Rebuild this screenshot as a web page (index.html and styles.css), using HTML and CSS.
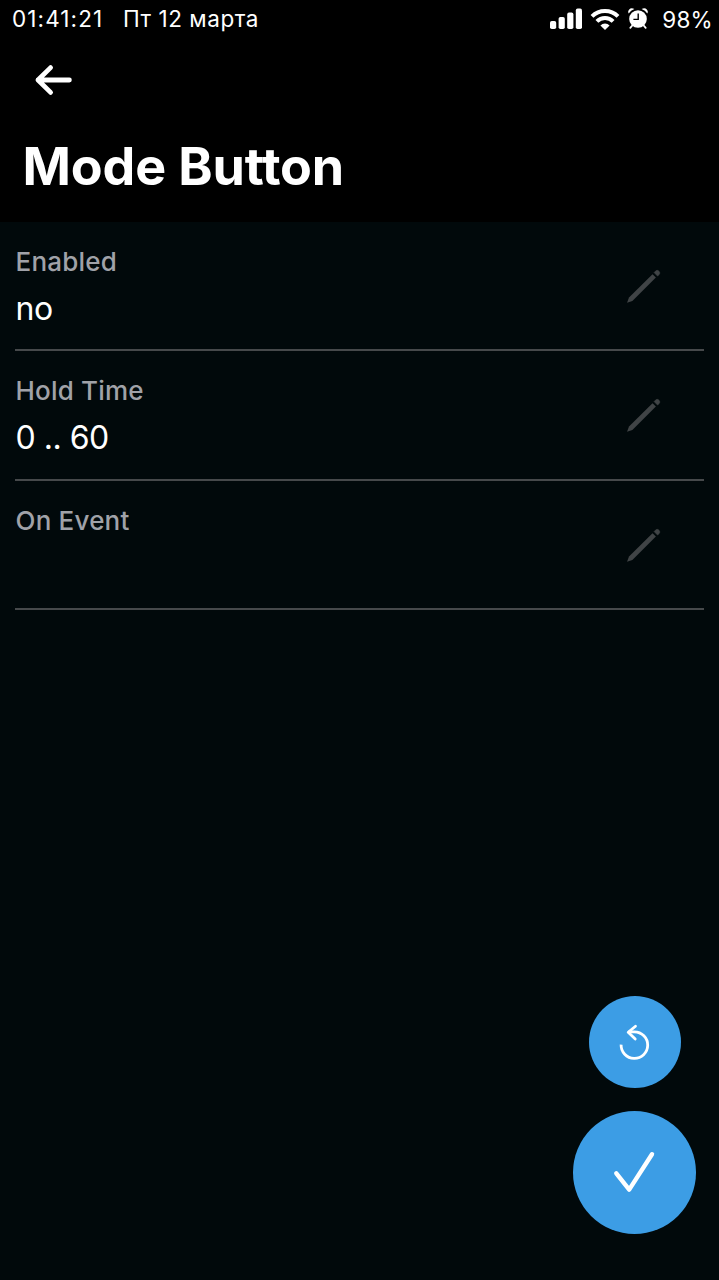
FILE: index.html
```
<!DOCTYPE html>
<html lang="en">
<head>
  <meta charset="utf-8">
  <title>Mode Button</title>
  <link rel="stylesheet" href="styles.css">
</head>
<body>
  <div class="status-bar">
    <span class="time">01:41:21</span>
    <span class="date">Пт 12 марта</span>
    <div class="status-icons">
      <svg class="signal" width="32" height="22" viewBox="0 0 32 22" fill="#fff">
        <rect x="0" y="13" width="6.2" height="8" rx="1.8"/>
        <rect x="8.6" y="9" width="6.2" height="12" rx="1.8"/>
        <rect x="17.2" y="4.6" width="6.2" height="16.4" rx="1.8"/>
        <rect x="25.8" y="0.6" width="6.2" height="20.4" rx="1.8"/>
      </svg>
      <svg class="wifi" width="30" height="22" viewBox="0 0 30 22" fill="none" stroke="#fff" stroke-width="4">
        <path d="M2 8.4a18.4 18.4 0 0 1 26 0"/>
        <path d="M6.9 13.4a11.5 11.5 0 0 1 16.2 0"/>
        <path d="M15 22l-4.6-4.6a6.5 6.5 0 0 1 9.2 0z" fill="#fff" stroke="none"/>
      </svg>
      <svg class="alarm" width="20" height="22" viewBox="0 0 20 22">
        <circle cx="10" cy="11" r="8.8" fill="#fff"/>
        <path d="M.7 5.4A10.5 10.5 0 0 1 6.4 .9Q3-.6 1.2 1.4T.7 5.4zM19.3 5.4A10.5 10.5 0 0 0 13.6 .9Q17-.6 18.8 1.4T19.3 5.4z" fill="#fff"/>
        <path d="M4.3 17.5l-2 2.4M15.7 17.5l2 2.4" stroke="#fff" stroke-width="1.8" stroke-linecap="round"/>
        <path d="M10.2 5.4v6H5.4" fill="none" stroke="#000" stroke-width="1.4"/>
      </svg>
      <span class="battery">98%</span>
    </div>
  </div>

  <header class="header">
    <button class="back-btn" aria-label="Back">
      <svg width="38" height="32" viewBox="0 0 38 32" fill="none" stroke="#fff" stroke-width="4.8" stroke-linecap="round" stroke-linejoin="round">
        <path d="M35.4 16H4M16.6 3.6L4 16 16.6 28.4"/>
      </svg>
    </button>
    <h1>Mode Button</h1>
  </header>

  <main class="settings">
    <div class="row">
      <div class="text">
        <div class="label">Enabled</div>
        <div class="value">no</div>
      </div>
      <svg class="pencil" width="36" height="36" viewBox="0 0 36 36">
        <path d="M1 34.8L3 29.6 26.5 6.2l3.4 3.4L6.4 33z"/>
        <path d="M28.1 4.6l1.3-1.4a2.5 2.5 0 0 1 3.6 3.6L31.5 8z" stroke="#404446" stroke-width=".6"/>
      </svg>
    </div>
    <div class="row">
      <div class="text">
        <div class="label">Hold Time</div>
        <div class="value">0 .. 60</div>
      </div>
      <svg class="pencil" width="36" height="36" viewBox="0 0 36 36">
        <path d="M1 34.8L3 29.6 26.5 6.2l3.4 3.4L6.4 33z"/>
        <path d="M28.1 4.6l1.3-1.4a2.5 2.5 0 0 1 3.6 3.6L31.5 8z" stroke="#404446" stroke-width=".6"/>
      </svg>
    </div>
    <div class="row">
      <div class="text">
        <div class="label">On Event</div>
        <div class="value"></div>
      </div>
      <svg class="pencil" width="36" height="36" viewBox="0 0 36 36">
        <path d="M1 34.8L3 29.6 26.5 6.2l3.4 3.4L6.4 33z"/>
        <path d="M28.1 4.6l1.3-1.4a2.5 2.5 0 0 1 3.6 3.6L31.5 8z" stroke="#404446" stroke-width=".6"/>
      </svg>
    </div>
  </main>

  <div class="actions">
    <button class="fab reset-btn" aria-label="Reset">
      <svg width="92" height="92" viewBox="0 0 92 92" fill="none" stroke="#fff" stroke-width="2.8" stroke-linecap="round" stroke-linejoin="round">
        <path d="M32.1 48.6A13.3 13.3 0 1 0 45.4 35.8H39.5" stroke-linecap="butt"/>
        <path d="M46.5 30.2L39.2 36.3 46.2 43"/>
      </svg>
    </button>
    <button class="fab save-btn" aria-label="Save">
      <svg width="123" height="123" viewBox="0 0 123 123" fill="none" stroke="#fff" stroke-width="4.4" stroke-linecap="round" stroke-linejoin="round">
        <path d="M43.3 62.3L56.2 78.6 79 43.2"/>
      </svg>
    </button>
  </div>
</body>
</html>
```
FILE: styles.css
```
body {
  margin: 0;
  min-height: 1280px;
  background-color: #01090b;
  color: #fff;
  font-family: Inter, "Liberation Sans", sans-serif;
}

button {
  padding: 0;
  border: none;
  background: none;
  cursor: pointer;
}

svg {
  display: block;
}

.status-bar {
  display: flex;
  align-items: center;
  height: 38px;
  padding: 0 6px 0 12px;
  background-color: #000;
  font-size: 22.5px;
  white-space: nowrap;
}

.time {
  width: 111px;
  letter-spacing: 1.1px;
}

.date {
  letter-spacing: 0.55px;
}

.time,
.date {
  padding-bottom: 1px;
}

.status-icons {
  display: flex;
  align-items: center;
  margin-left: auto;
}

.wifi {
  margin-left: 8px;
}

.alarm {
  margin: 0 14px 0 8px;
}

.battery {
  letter-spacing: 0.3px;
}

.header {
  height: 183.5px;
  background-color: #000;
}

.back-btn {
  display: block;
  padding: 26px 0 0 34px;
}

h1 {
  margin: 40px 0 0 22.5px;
  font-size: 52px;
  line-height: 62px;
  font-weight: 700;
  letter-spacing: -0.15px;
}

.row {
  display: flex;
  align-items: center;
  justify-content: space-between;
  box-sizing: border-box;
  height: 129.5px;
  margin: 0 15px;
  padding: 1px 42px 0 0;
  border-bottom: 2px solid #46494b;
}

.text {
  padding-left: 0.5px;
}

.label {
  height: 43px;
  padding-top: 3px;
  color: #a0a2a8;
  font-size: 26px;
  line-height: 32px;
  font-weight: 500;
  letter-spacing: 0.2px;
}

.value {
  height: 40px;
  font-size: 32px;
  line-height: 40px;
  letter-spacing: -0.5px;
}

.pencil {
  fill: #404446;
}

.actions {
  position: fixed;
  right: 23px;
  bottom: 46px;
  display: flex;
  flex-direction: column;
  align-items: center;
  gap: 23px;
}

.fab {
  border-radius: 50%;
  background-color: #3c9de5;
}
```
